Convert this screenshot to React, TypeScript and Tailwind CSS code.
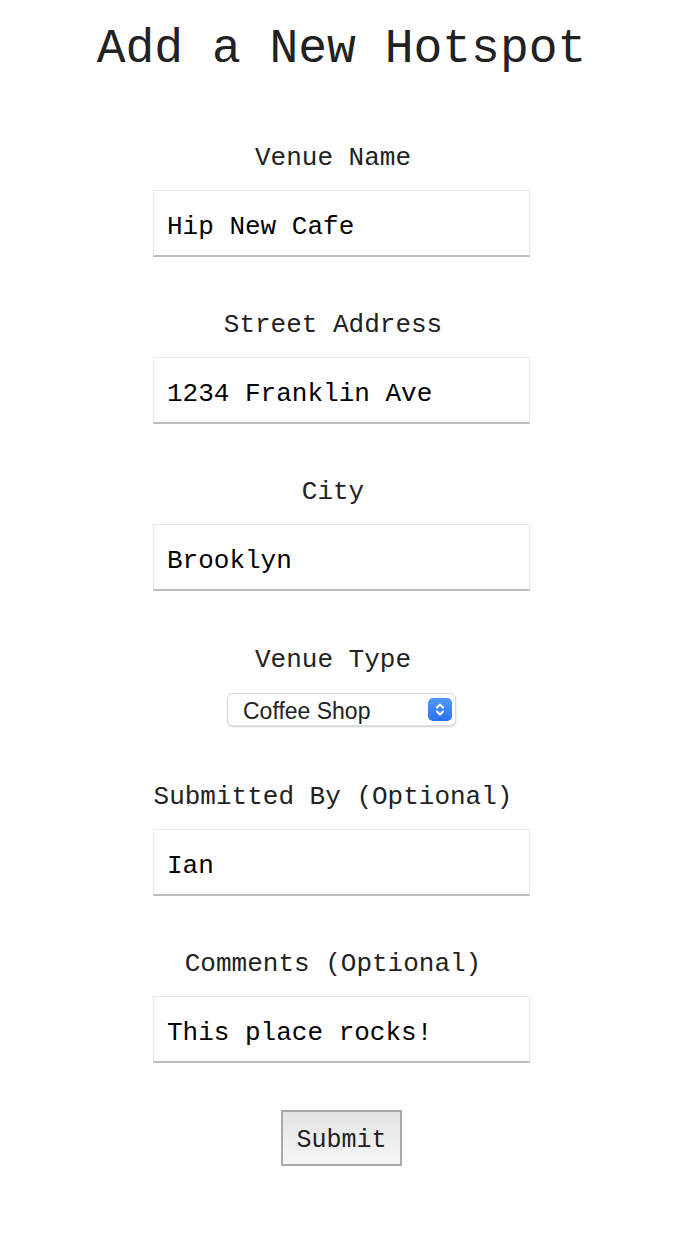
import React from "react";

const mono = { fontFamily: '"Liberation Mono", "Courier New", monospace' };

function Field({ label, value, first }: { label: string; value: string; first?: boolean }) {
  return (
    <div className={`flex flex-col items-center ${first ? "" : "mt-[53px]"}`}>
      <label className="pr-[17px] text-[26px] leading-[30px] text-[#222]">{label}</label>
      <input
        readOnly
        value={value}
        className="mt-[17px] w-[377px] h-[67px] bg-white border border-[#e8e8e8] border-b-[#bdbdbd] border-b-2 pl-[13px] pt-[7px] text-[26px] text-black outline-none"
        style={mono}
      />
    </div>
  );
}

export default function App() {
  return (
    <div className="w-[674px] min-h-[1242px] bg-white flex flex-col items-center pl-[9px]" style={mono}>
      <h1 className="mt-[21px] text-[48px] leading-[56px] text-[#222]">Add a New Hotspot</h1>
      <div className="mt-[66px] flex flex-col items-center">
        <Field label="Venue Name" value="Hip New Cafe" first />
        <Field label="Street Address" value="1234 Franklin Ave" />
        <Field label="City" value="Brooklyn" />
        <div className="mt-[54px] flex flex-col items-center">
          <label className="pr-[17px] text-[26px] leading-[30px] text-[#222]">Venue Type</label>
          <div className="relative mt-[18px] w-[229px] h-[33px]">
            <select
              className="appearance-none w-full h-full rounded-[6px] bg-white border border-[#dcdcdc] shadow-[0_1px_2px_rgba(0,0,0,0.2)] pl-[15px] text-[23px] text-[#222] outline-none"
              style={{ fontFamily: '"Liberation Sans", Arial, sans-serif' }}
              defaultValue="Coffee Shop"
            >
              <option>Coffee Shop</option>
            </select>
            <div className="pointer-events-none absolute right-[4px] top-[5px] w-[24px] h-[23px] rounded-[5px] bg-gradient-to-b from-[#5298fb] to-[#2a72f2] flex items-center justify-center">
              <svg width="12" height="17" viewBox="0 0 12 17" fill="none" stroke="white" strokeWidth="2" strokeLinecap="round" strokeLinejoin="round">
                <path d="M3 6.5l3-3 3 3" />
                <path d="M3 10.5l3 3 3-3" />
              </svg>
            </div>
          </div>
        </div>
        <div className="mt-[56px]">
          <Field label="Submitted By (Optional)" value="Ian" first />
        </div>
        <Field label="Comments (Optional)" value="This place rocks!" />
        <button
          className="mt-[47px] w-[121px] h-[56px] border-2 border-[#a9a9a9] bg-gradient-to-b from-[#e3e3e3] to-[#f6f6f6] pt-[6px] text-[25px] text-[#222]"
          style={mono}
        >
          Submit
        </button>
      </div>
    </div>
  );
}
